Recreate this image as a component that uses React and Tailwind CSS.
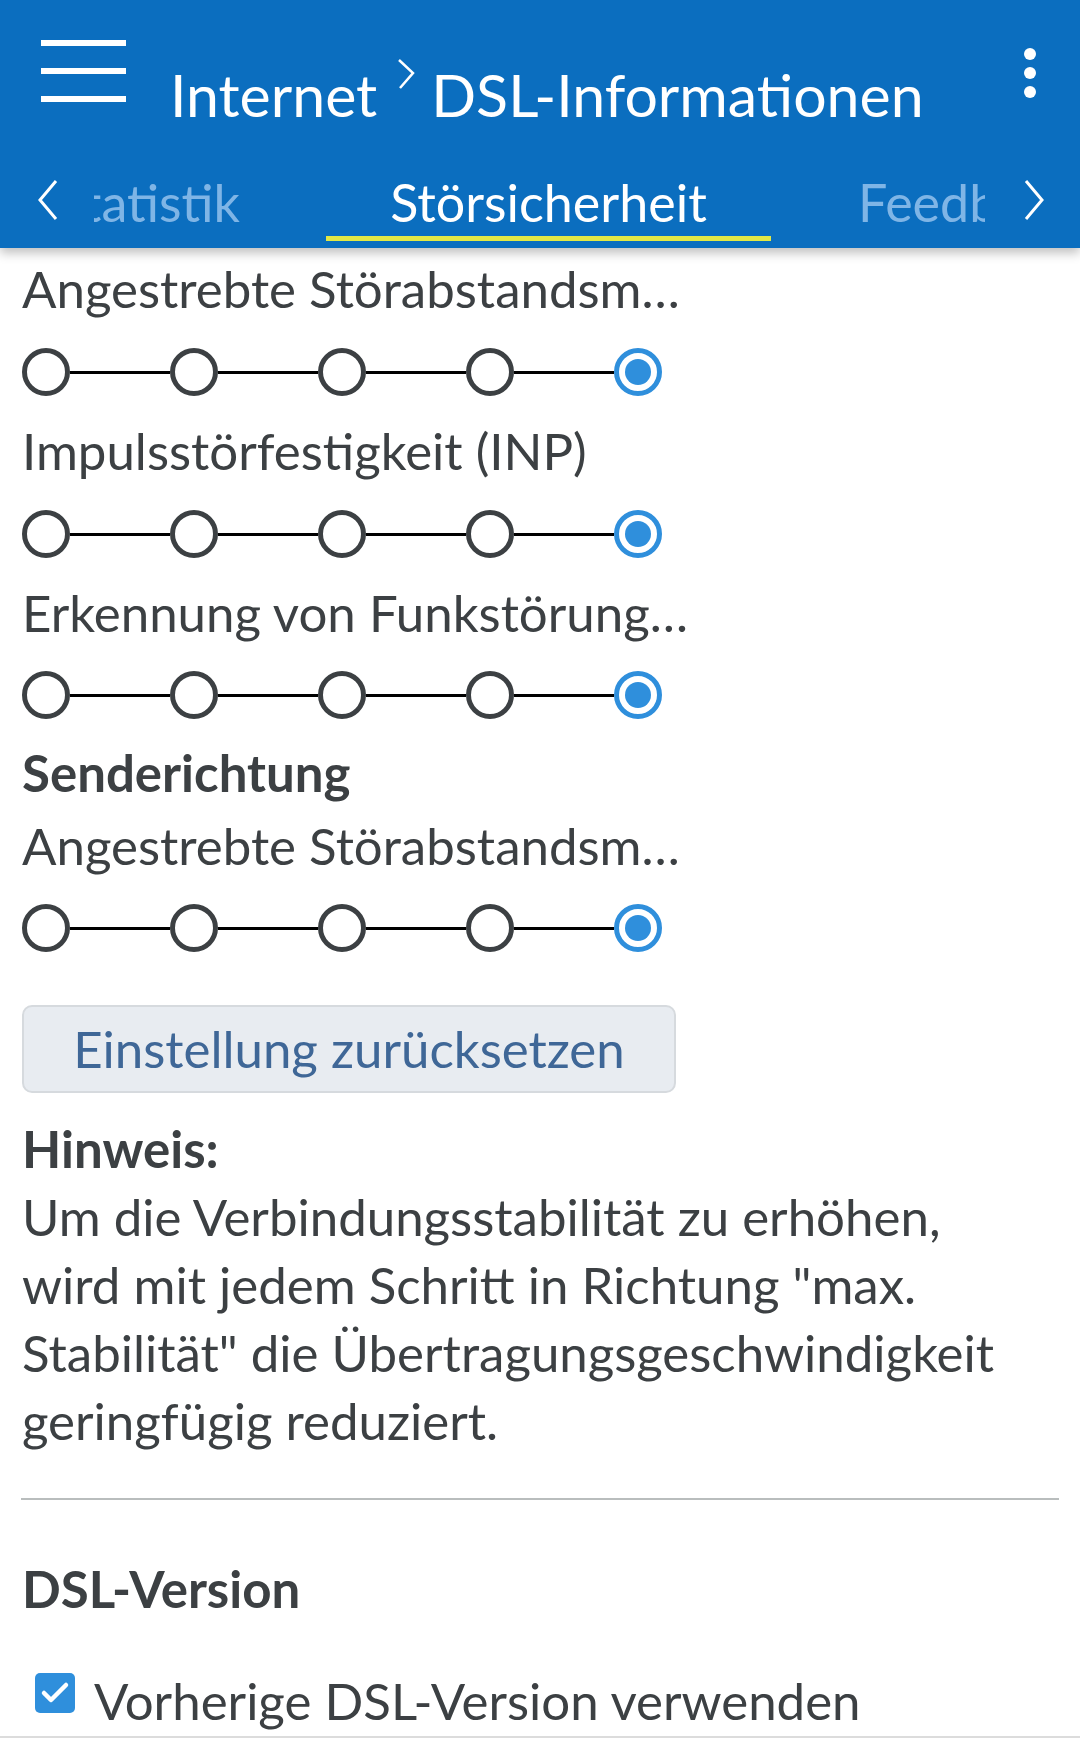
import React from 'react'

const Radio = ({ checked }) => (
    checked ? (
        <div className='w-[48px] h-[48px] rounded-full border-[5px] border-[#2f8fdc] flex items-center justify-center shrink-0'>
            <div className='w-[26px] h-[26px] rounded-full bg-[#2f8fdc]'></div>
        </div>
    ) : (
        <div className='w-[48px] h-[48px] rounded-full border-[5px] border-[#3c4043] shrink-0'></div>
    )
)

const Stepper = ({ className }) => (
    <div className={'flex items-center ' + className}>
        <Radio />
        <div className='w-[100px] h-[3px] bg-black'></div>
        <Radio />
        <div className='w-[100px] h-[3px] bg-black'></div>
        <Radio />
        <div className='w-[100px] h-[3px] bg-black'></div>
        <Radio />
        <div className='w-[100px] h-[3px] bg-black'></div>
        <Radio checked />
    </div>
)

const App = () => {
    return (
        <div className="w-[1080px] h-[1751px] bg-white overflow-hidden text-[#3c4043]" style={{ fontFamily: 'Lato, "Open Sans", sans-serif' }}>
            <header className='relative z-10 h-[248px] bg-[#0b6ebf] shadow-[0_5px_10px_rgba(0,0,0,0.25)] text-white'>
                <div className='flex h-[140px]'>
                    <div className='ml-[41px] mt-[40px] w-[85px] flex flex-col gap-[22px]'>
                        <div className='h-[6px] bg-white'></div>
                        <div className='h-[6px] bg-white'></div>
                        <div className='h-[6px] bg-white'></div>
                    </div>
                    <div className='ml-[44px] mt-[59px] flex items-start text-[59px] leading-[71px] whitespace-nowrap'>
                        <span>Internet</span>
                        <svg width="22" height="30" viewBox="0 0 22 30" className='ml-[18px] mr-[14px]' fill="none" stroke="white" strokeWidth="2.5">
                            <polyline points="4,1 18,14 5,29" />
                        </svg>
                        <span>DSL-Informationen</span>
                    </div>
                    <div className='ml-auto mr-[44px] mt-[48px] flex flex-col gap-[7px]'>
                        <div className='w-[12px] h-[12px] rounded-full bg-white'></div>
                        <div className='w-[12px] h-[12px] rounded-full bg-white'></div>
                        <div className='w-[12px] h-[12px] rounded-full bg-white'></div>
                    </div>
                </div>
                <div className='flex items-start h-[108px] pl-[37px]'>
                    <svg width="21" height="42" viewBox="0 0 21 42" className='mt-[39px] shrink-0' fill="none" stroke="white" strokeWidth="3">
                        <polyline points="19,2 3,21 19,40" />
                    </svg>
                    <div className='ml-[36px] w-[146px] overflow-hidden flex justify-end mt-[31px] shrink-0'>
                        <span className='text-[52px] leading-[62px] text-[#7fb5e6] whitespace-nowrap'>Statistik</span>
                    </div>
                    <div className='ml-[86px] w-[445px] flex flex-col items-center mt-[31px] shrink-0'>
                        <span className='text-[52px] leading-[62px] whitespace-nowrap'>Störsicherheit</span>
                        <div className='w-full h-[5px] mt-[3px] bg-[#e3e846]'></div>
                    </div>
                    <div className='ml-[87px] w-[127px] overflow-hidden mt-[31px] shrink-0'>
                        <span className='text-[52px] leading-[62px] text-[#7fb5e6] whitespace-nowrap'>Feedback</span>
                    </div>
                    <svg width="21" height="42" viewBox="0 0 21 42" className='ml-[39px] mt-[39px] shrink-0' fill="none" stroke="white" strokeWidth="3">
                        <polyline points="2,2 18,21 2,40" />
                    </svg>
                </div>
            </header>

            <main className='pl-[22px] text-[51px] leading-[62px] whitespace-nowrap'>
                <div className='mt-[10px]'>Angestrebte Störabstandsm…</div>
                <Stepper className='mt-[28px]' />
                <div className='mt-[24px]'>Impulsstörfestigkeit (INP)</div>
                <Stepper className='mt-[28px]' />
                <div className='mt-[24px]'>Erkennung von Funkstörung…</div>
                <Stepper className='mt-[27px]' />
                <div className='mt-[23px] font-bold'>Senderichtung</div>
                <div className='mt-[11px]'>Angestrebte Störabstandsm…</div>
                <Stepper className='mt-[27px]' />

                <button className='mt-[53px] w-[654px] h-[88px] bg-[#e8ecf1] border-2 border-[#d6dade] rounded-[10px] text-[#3f6797] text-[51px]'>
                    Einstellung zurücksetzen
                </button>

                <div className='mt-[22px] leading-[68px]'>
                    <div className='font-bold'>Hinweis:</div>
                    <div>Um die Verbindungsstabilität zu erhöhen,</div>
                    <div>wird mit jedem Schritt in Richtung "max.</div>
                    <div>Stabilität" die Übertragungsgeschwindigkeit</div>
                    <div>geringfügig reduziert.</div>
                </div>
            </main>

            <div className='mx-[21px] mt-[43px] h-[2px] bg-[#b9bdbd]'></div>

            <div className='pl-[22px] text-[51px] leading-[62px] whitespace-nowrap'>
                <div className='mt-[58px] font-bold'>DSL-Version</div>
                <div className='mt-[42px] flex items-start'>
                    <div className='ml-[13px] mt-[11px] w-[40px] h-[40px] rounded-[5px] bg-[#2f8fdc] flex items-center justify-center shrink-0'>
                        <svg width="30" height="24" viewBox="0 0 30 24" fill="none" stroke="white" strokeWidth="4.5" strokeLinecap="round" strokeLinejoin="round">
                            <polyline points="4,12 11,19 26,4" />
                        </svg>
                    </div>
                    <span className='ml-[19px] mt-[8px]'>Vorherige DSL-Version verwenden</span>
                </div>
            </div>
            <div className='mt-[4px] h-[2px] bg-[#dcdcdc]'></div>
        </div>
    )
}

export default App
